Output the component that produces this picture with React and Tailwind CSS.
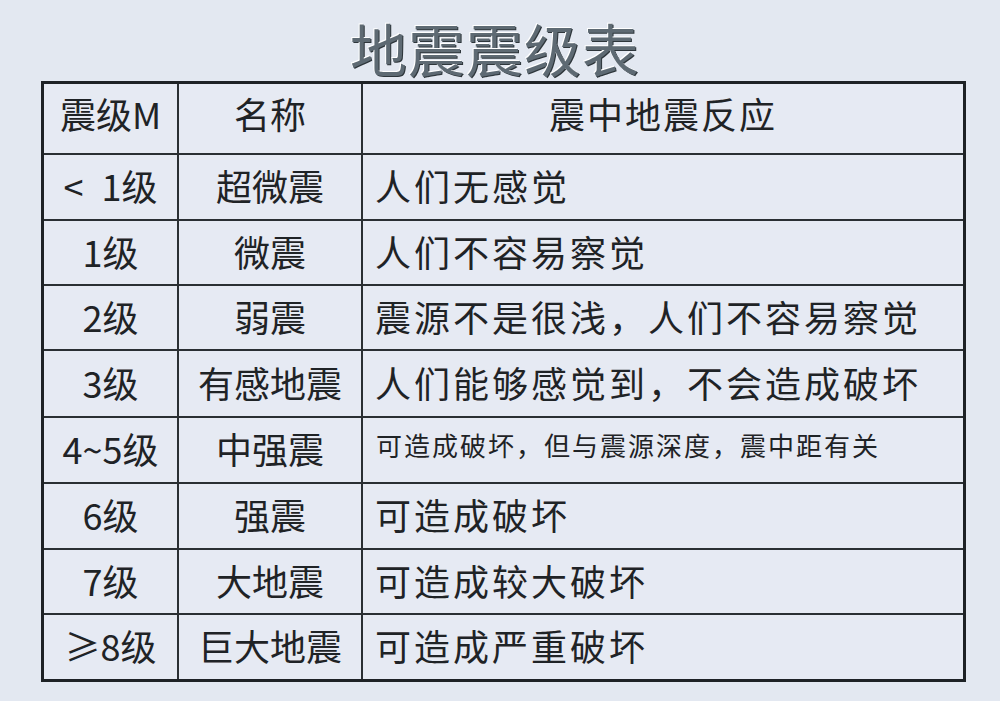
const rows = [
  { m: "<\u20021级", name: "超微震", desc: "人们无感觉", h: "h-[66px]" },
  { m: "1级", name: "微震", desc: "人们不容易察觉", h: "h-[65px]" },
  { m: "2级", name: "弱震", desc: "震源不是很浅，人们不容易察觉", h: "h-[65px]" },
  { m: "3级", name: "有感地震", desc: "人们能够感觉到，不会造成破坏", h: "h-[67px]" },
  { m: "4~5级", name: "中强震", desc: "可造成破坏，但与震源深度，震中距有关", h: "h-[66px]", small: true },
  { m: "6级", name: "强震", desc: "可造成破坏", h: "h-[66px]" },
  { m: "7级", name: "大地震", desc: "可造成较大破坏", h: "h-[65px]" },
  { m: "≥8级", name: "巨大地震", desc: "可造成严重破坏", h: "h-[64px]", last: true },
];

function Row({ row }) {
  const line = row.last ? "" : "border-b-2 border-b-[#2a2f33]";
  return (
    <div className={`flex ${row.h} ${line}`}>
      <div className="w-[135px] flex items-center justify-center border-r-2 border-r-[#2a2f33] text-[36px] pb-1">
        {row.m}
      </div>
      <div className="w-[184px] flex items-center justify-center border-r-2 border-r-[#2a2f33] text-[36px] pb-1">
        {row.name}
      </div>
      {row.small ? (
        <div className="flex-1 pl-[13px] pt-[9px] text-[26px] leading-[36px] tracking-[2px]">
          {row.desc}
        </div>
      ) : (
        <div className="flex-1 flex items-center pl-[12px] text-[36px] tracking-[3px] pb-1">
          {row.desc}
        </div>
      )}
    </div>
  );
}

export default function App() {
  return (
    <div
      className="w-[1000px] h-[701px] bg-[#e3e8f1] text-[#1f2326] overflow-hidden"
      style={{ fontFamily: '"Noto Sans CJK SC", "Noto Sans", sans-serif' }}
    >
      <div className="h-[81px] flex justify-center pr-[10px]">
        <h1 className="text-[57px] leading-[94px] font-normal tracking-[1px] text-[#5e6a73] [text-shadow:-1px_-1px_0_#ffffff,1px_1px_0_#2e363b]">
          地震震级表
        </h1>
      </div>
      <div className="ml-[41px] w-[925px] border-[3px] border-[#1e2226] bg-[#e6eaf3]">
        <div className="flex h-[71px] border-b-2 border-b-[#2a2f33]">
          <div className="w-[135px] flex items-center justify-center border-r-2 border-r-[#2a2f33] text-[36px] pb-3">
            震级M
          </div>
          <div className="w-[184px] flex items-center justify-center border-r-2 border-r-[#2a2f33] text-[36px] pb-3">
            名称
          </div>
          <div className="flex-1 flex items-center justify-center text-[36px] tracking-[2px] pb-3">
            震中地震反应
          </div>
        </div>
        {rows.map((r) => (
          <Row key={r.m} row={r} />
        ))}
      </div>
    </div>
  );
}
